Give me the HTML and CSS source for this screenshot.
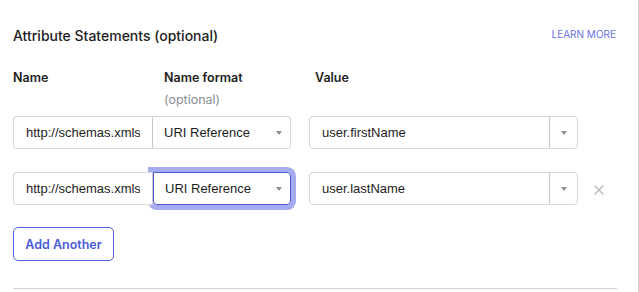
FILE: index.html
```html
<!doctype html>
<html>
    <head>
        <link rel="stylesheet" href="styles.css">
    </head>
    <body>
        <div class="panel">
            <div class="head">
                <span class="title">Attribute Statements (optional)</span>
                <a class="learn">LEARN MORE</a>
            </div>
            <div class="labels">
                <div class="lab lab-name">Name</div>
                <div class="lab lab-format">Name format<span class="opt">(optional)</span></div>
                <div class="lab">Value</div>
            </div>
            <div class="row">
                <div class="pair">
                    <div class="field name"><span class="clip">http://schemas.xmlsoap.org/ws/2005/05/identity/claims/givenname</span></div>
                    <div class="field select">URI Reference<i class="caret"></i></div>
                </div>
                <div class="combo">
                    <span class="combo-text">user.firstName</span>
                    <span class="combo-btn"><i class="caret"></i></span>
                </div>
            </div>
            <div class="row">
                <div class="pair">
                    <div class="field name"><span class="clip">http://schemas.xmlsoap.org/ws/2005/05/identity/claims/surname</span></div>
                    <div class="field select focus">URI Reference<i class="caret"></i></div>
                </div>
                <div class="combo">
                    <span class="combo-text">user.lastName</span>
                    <span class="combo-btn"><i class="caret"></i></span>
                </div>
                <span class="remove">
                    <svg width="12" height="12" viewBox="0 0 12 12"><path d="M1.5 1.5 L10.5 10.5 M10.5 1.5 L1.5 10.5" stroke="#b9b9be" stroke-width="1.4" fill="none"/></svg>
                </span>
            </div>
            <button class="add">Add Another</button>
            <div class="rule"></div>
        </div>
    </body>
</html>
```
FILE: styles.css
```css
html, body {
    margin: 0;
    background: #fff;
}
.panel {
    box-sizing: border-box;
    width: 639px;
    height: 292px;
    padding: 26px 21px 0 13px;
    border-right: 1px solid #d4d4d8;
    font-family: Inter, "Liberation Sans", sans-serif;
    color: #1d1d21;
    overflow: hidden;
}
.head {
    display: flex;
    justify-content: space-between;
    align-items: flex-start;
    height: 20px;
}
.title {
    font-size: 14px;
    line-height: 20px;
    font-weight: 500;
}
.learn {
    font-size: 10px;
    line-height: 14px;
    margin-top: 1px;
    color: #6a71e4;
    margin-right: 1px;
}
.labels {
    display: flex;
    margin-top: 23px;
    font-size: 12.5px;
    line-height: 18px;
    font-weight: 600;
}
.lab {
    width: 151px;
}
.opt {
    display: block;
    margin-top: 4px;
    font-weight: 400;
    color: #8c8c96;
}
.row {
    display: flex;
    align-items: center;
    margin-top: 7px;
    height: 33px;
}
.row + .row {
    margin-top: 23px;
}
.pair {
    display: flex;
    width: 278px;
    margin-right: 18px;
}
.field {
    box-sizing: border-box;
    height: 33px;
    line-height: 31px;
    font-family: "Liberation Sans", Arial, sans-serif;
    font-size: 13px;
    color: #1d1d21;
    border: 1px solid #d7d7dc;
    white-space: nowrap;
    overflow: hidden;
    min-width: 0;
    flex: none;
}
.name {
    width: 140px;
    padding: 0 12px 0 12px;
    border-radius: 4px 0 0 4px;
    border-right: 1px solid #c8c8cc;
    position: relative;
    z-index: 1;
    background: #fff;
}
.clip {
    display: block;
    overflow: hidden;
}
.select {
    width: 138px;
    padding: 0 8px 0 11px;
    border-left: none;
    border-radius: 0 4px 4px 0;
    display: flex;
    align-items: center;
    justify-content: space-between;
}
.select.focus {
    border: 1px solid #4b5bd6;
    box-shadow: 0 0 0 5px #a6abef;
    border-radius: 0 4px 4px 4px;
}
.caret {
    display: inline-block;
    width: 0;
    height: 0;
    border-left: 3.5px solid transparent;
    border-right: 3.5px solid transparent;
    border-top: 4px solid #8e8e96;
}
.combo {
    box-sizing: border-box;
    width: 269px;
    height: 33px;
    display: flex;
    border: 1px solid #d7d7dc;
    border-radius: 4px;
    font-family: "Liberation Sans", Arial, sans-serif;
    font-size: 13px;
    line-height: 31px;
}
.combo-text {
    flex: 1;
    padding: 0 12px;
}
.combo-btn {
    width: 27px;
    border-left: 1px solid #c8c8cc;
    display: flex;
    align-items: center;
    justify-content: center;
}
.remove {
    display: flex;
    margin-left: 15px;
    margin-top: 2px;
}
.add {
    display: block;
    margin-top: 22px;
    width: 101px;
    height: 34px;
    padding: 0;
    border: 1px solid #4f63dc;
    border-radius: 5px;
    background: #fff;
    color: #4b5bd6;
    font-family: Inter, "Liberation Sans", sans-serif;
    font-size: 12.5px;
    font-weight: 600;
}
.rule {
    margin-top: 27px;
    height: 1px;
    background: #d4d4d8;
}
```
